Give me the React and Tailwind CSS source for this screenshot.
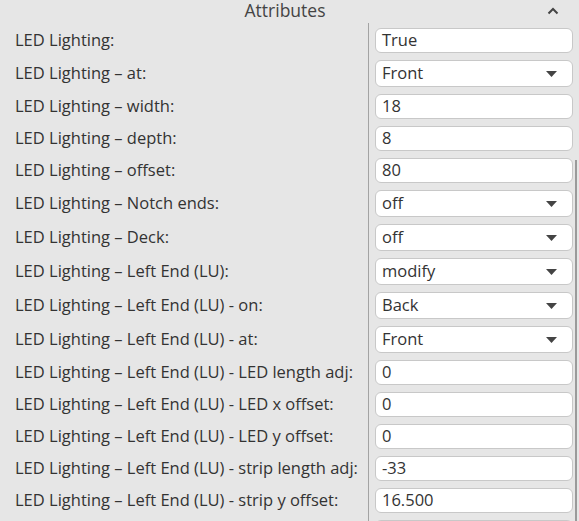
import React from "react";

const rows = [
    { label: "LED Lighting:", value: "True" },
    { label: "LED Lighting – at:", value: "Front", select: true },
    { label: "LED Lighting – width:", value: "18" },
    { label: "LED Lighting – depth:", value: "8" },
    { label: "LED Lighting – offset:", value: "80" },
    { label: "LED Lighting – Notch ends:", value: "off", select: true },
    { label: "LED Lighting – Deck:", value: "off", select: true },
    { label: "LED Lighting – Left End (LU):", value: "modify", select: true },
    { label: "LED Lighting – Left End (LU) - on:", value: "Back", select: true },
    { label: "LED Lighting – Left End (LU) - at:", value: "Front", select: true },
    { label: "LED Lighting – Left End (LU) - LED length adj:", value: "0" },
    { label: "LED Lighting – Left End (LU) - LED x offset:", value: "0" },
    { label: "LED Lighting – Left End (LU) - LED y offset:", value: "0" },
    { label: "LED Lighting – Left End (LU) - strip length adj:", value: "-33" },
    { label: "LED Lighting – Left End (LU) - strip y offset:", value: "16.500" },
    { label: "LED Lighting – Left End (LU) - strip z offset:", value: "0" },
];

const Caret = () => (
    <svg width="11" height="6" viewBox="0 0 11 6" className="shrink-0">
        <path d="M0 0 H11 L5.5 6 Z" fill="#444" />
    </svg>
);

const App = () => {
    return (
        <div className="relative w-[579px] h-[521px] overflow-hidden bg-[#e6e6e6] text-[#333] font-['Open_Sans',sans-serif]">
            {/* --- Header --- */}
            <header className="h-[23px] flex items-start justify-center relative">
                <span className="text-[17.5px] leading-[20px] text-[#444] -ml-[9px]">Attributes</span>
                <svg
                    width="12"
                    height="8"
                    viewBox="0 0 12 8"
                    className="absolute right-[20px] top-[7px]"
                >
                    <path d="M1.5 6.5 L6 2 L10.5 6.5" fill="none" stroke="#444" strokeWidth="2" />
                </svg>
            </header>

            {/* --- Rows --- */}
            <div className="flex flex-col">
                {rows.map((row, i) => (
                    <div key={i} className="flex">
                        <div
                            className={`w-[368px] shrink-0 pl-[15px] text-[16.5px] flex items-center whitespace-nowrap ${
                                i === 0 ? "pt-[5px]" : ""
                            }`}
                        >
                            <span className="-mt-[8px]">{row.label}</span>
                        </div>
                        <div
                            className={`flex-1 border-l border-[#a3a3a3] pl-[6px] pr-[6px] pb-[7px] ${
                                i === 0 ? "pt-[5px]" : ""
                            }`}
                        >
                            {row.select ? (
                                <div className="h-[27px] bg-white border border-[#c8c8c8] rounded-[6px] flex items-center justify-between pl-[6px] pr-[15px] text-[16.5px]">
                                    <span>{row.value}</span>
                                    <Caret />
                                </div>
                            ) : (
                                <div className="h-[25px] bg-white border border-[#c8c8c8] rounded-[6px] flex items-center pl-[6px] text-[16.5px]">
                                    <span>{row.value}</span>
                                </div>
                            )}
                        </div>
                    </div>
                ))}
            </div>

            {/* scrollbar */}
            <div className="absolute right-[2px] top-[160px] bottom-0 w-[2px] bg-[#9a9a9a]" />
        </div>
    );
};

export default App;
